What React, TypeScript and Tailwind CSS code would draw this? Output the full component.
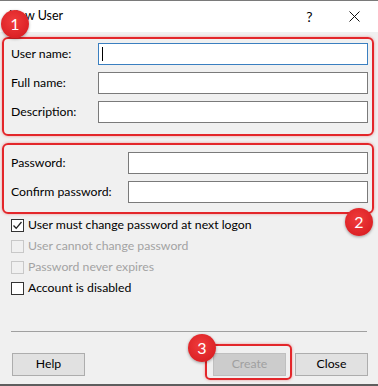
import React from 'react';

const font = { fontFamily: 'Lato, "Noto Sans", "Liberation Sans", Arial, sans-serif' };

const Badge = ({ n, className }: { n: string; className: string }) => (
  <div
    className={`absolute w-[28px] h-[28px] rounded-full bg-[radial-gradient(circle_at_45%_40%,#f03c3c,#dc2226_70%,#c4181c)] shadow-[0_1px_3px_rgba(0,0,0,0.35)] flex items-center justify-center text-white text-[16px] leading-none ${className}`}
  >
    {n}
  </div>
);

const TextBox = ({ focused }: { focused?: boolean }) => (
  <div
    className={`relative h-[22px] bg-white border ${focused ? 'border-[#3a7fc0]' : 'border-[#7a7a7a]'}`}
  >
    {focused && <div className="absolute left-[3px] top-[3px] w-px h-[14px] bg-black" />}
  </div>
);

const CheckRow = ({ label, checked, disabled }: { label: string; checked?: boolean; disabled?: boolean }) => (
  <div className="h-[21px] flex items-center pl-[11px] gap-[4px]">
    <div
      className={`w-[13px] h-[13px] border flex items-center justify-center ${
        disabled ? 'border-[#c8c8c8] bg-[#f0f0f0]' : 'border-[#333333] bg-white'
      }`}
    >
      {checked && (
        <svg width="11" height="11" viewBox="0 0 11 11">
          <path d="M1.5 5.5 L4.2 8.3 L9.5 2" fill="none" stroke="#222" strokeWidth="1.3" />
        </svg>
      )}
    </div>
    <span className={`text-[12.25px] ${disabled ? 'text-[#a3a3a3]' : 'text-black'}`}>{label}</span>
  </div>
);

const Button = ({ label, disabled }: { label: string; disabled?: boolean }) => (
  <div
    className={`w-[73px] h-[23px] flex items-center justify-center text-[12.25px] border ${
      disabled ? 'bg-[#cccccc] border-[#bfbfbf] text-[#a0a0a0]' : 'bg-[#e1e1e1] border-[#adadad] text-black'
    }`}
  >
    {label}
  </div>
);

export default function App() {
  return (
    <div
      className="relative w-[378px] h-[386px] bg-[#f0f0f0] overflow-hidden flex flex-col border-t border-[#7a7a7a]"
      style={font}
    >
      {/* Title bar */}
      <div className="h-[31px] bg-white flex items-center shrink-0">
        <span className="pl-[9px] text-[12.5px] text-black">New User</span>
        <div className="ml-auto flex pr-[1px]">
          <div className="w-[45px] h-[30px] flex items-center justify-center text-[14px] text-black">?</div>
          <div className="w-[45px] h-[30px] flex items-center justify-center">
            <svg width="11" height="11" viewBox="0 0 11 11">
              <path d="M0.5 0.5 L10.5 10.5 M10.5 0.5 L0.5 10.5" stroke="#111" strokeWidth="1" />
            </svg>
          </div>
        </div>
      </div>

      {/* Group 1 */}
      <div className="mt-[5px] ml-[2px] w-[372px] border-2 border-[#e3262a] rounded-[6px] shadow-[0_0_3px_rgba(227,38,42,0.45)] pt-[4px] pb-[11px] pr-[4px] flex flex-col gap-[7px]">
        {['User name:', 'Full name:', 'Description:'].map((l, i) => (
          <div key={l} className="flex items-center">
            <span className="w-[94px] pl-[7px] text-[12.25px] text-black">{l}</span>
            <div className="flex-1">
              <TextBox focused={i === 0} />
            </div>
          </div>
        ))}
      </div>

      {/* Group 2 */}
      <div className="mt-[7px] ml-[2px] w-[372px] border-2 border-[#e3262a] rounded-[6px] shadow-[0_0_3px_rgba(227,38,42,0.45)] pt-[7px] pb-[9px] pr-[4px] flex flex-col gap-[7px]">
        {['Password:', 'Confirm password:'].map((l) => (
          <div key={l} className="flex items-center">
            <span className="w-[124px] pl-[7px] text-[12.25px] text-black">{l}</span>
            <div className="flex-1">
              <TextBox />
            </div>
          </div>
        ))}
      </div>

      {/* Options */}
      <div className="mt-[1px] flex flex-col">
        <CheckRow label="User must change password at next logon" checked />
        <CheckRow label="User cannot change password" disabled />
        <CheckRow label="Password never expires" disabled />
        <CheckRow label="Account is disabled" />
      </div>

      <div className="mt-[32px] mx-[11px] h-px bg-[#a0a0a0]" />

      <div className="mt-[21px] flex pl-[12px] pr-[10px]">
        <Button label="Help" />
        <div className="ml-auto flex gap-[9px]">
          <Button label="Create" disabled />
          <Button label="Close" />
        </div>
      </div>

      <div className="mt-auto h-[2px] bg-[#5e5e5e]" />

      {/* Annotations */}
      <div className="absolute left-[205px] top-[343px] w-[87px] h-[36px] border-2 border-[#e3262a] rounded-[5px] shadow-[0_0_3px_rgba(227,38,42,0.45)]" />
      <Badge n="1" className="left-[1px] top-[9px]" />
      <Badge n="2" className="left-[345px] top-[207px]" />
      <Badge n="3" className="left-[188px] top-[333px]" />
    </div>
  );
}
